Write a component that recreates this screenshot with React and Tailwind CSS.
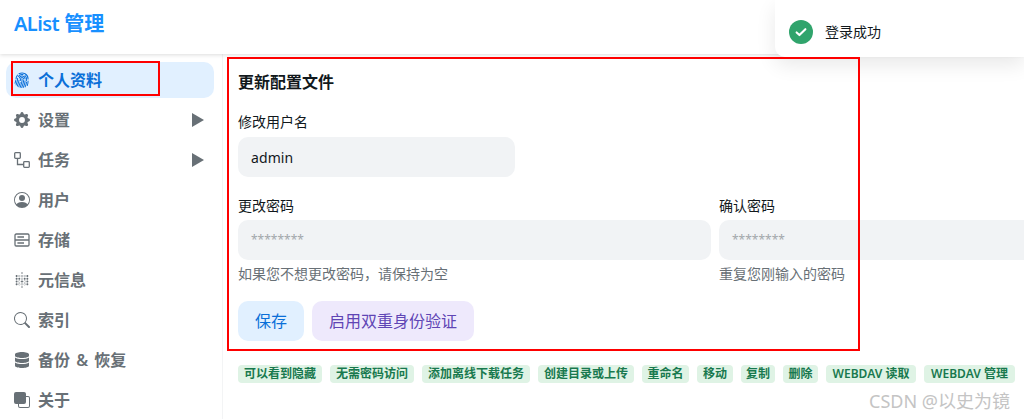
import React from 'react';
import {
  BsFingerprint,
  BsGearFill,
  BsPersonCircle,
  BsSearch,
  BsFront,
} from 'react-icons/bs';
import { SiMetabase } from 'react-icons/si';
import { FaDatabase } from 'react-icons/fa';

const FONT = '"Noto Sans", "Noto Sans CJK SC", sans-serif';

// small two-node flow icon next to the tasks entry
const TasksIcon = () => (
  <svg viewBox="0 0 16 16" className="w-4 h-4" fill="none" stroke="currentColor" strokeWidth="1.3">
    <rect x="0.7" y="0.7" width="5.6" height="5.6" rx="0.8" />
    <rect x="9.7" y="9.7" width="5.6" height="5.6" rx="0.8" />
    <path d="M3.5 6.3v6.2h6.2" />
  </svg>
);

const StorageIcon = () => (
  <svg viewBox="0 0 16 16" className="w-4 h-4" fill="none" stroke="currentColor" strokeWidth="1.3">
    <rect x="1" y="2" width="14" height="12" rx="1.2" />
    <path d="M1 8h14M3.4 5h6.6M3.4 11h6.6" />
  </svg>
);

const menu = [
  { title: '个人资料', icon: <BsFingerprint className="w-4 h-4" />, active: true },
  { title: '设置', icon: <BsGearFill className="w-4 h-4" />, arrow: true },
  { title: '任务', icon: <TasksIcon />, arrow: true },
  { title: '用户', icon: <BsPersonCircle className="w-4 h-4" /> },
  { title: '存储', icon: <StorageIcon /> },
  { title: '元信息', icon: <SiMetabase className="w-4 h-4" /> },
  { title: '索引', icon: <BsSearch className="w-4 h-4" /> },
  { title: '备份 & 恢复', icon: <FaDatabase className="w-4 h-4" /> },
  { title: '关于', icon: <BsFront className="w-4 h-4" /> },
];

const permissions = [
  { text: '可以看到隐藏', size: 'w-[84px]' },
  { text: '无需密码访问', size: 'w-[84px]' },
  { text: '添加离线下载任务', size: 'w-[108px]' },
  { text: '创建目录或上传', size: 'w-[96px]' },
  { text: '重命名', size: 'w-[47px]' },
  { text: '移动', size: 'w-[36px]' },
  { text: '复制', size: 'w-[34px]' },
  { text: '删除', size: 'w-[35px]' },
  { text: 'WEBDAV 读取', size: 'w-[90px]' },
  { text: 'WEBDAV 管理', size: 'w-[91px]' },
];

const Sidebar = () => (
  <aside className="w-[223px] shrink-0 border-r border-[#f3f4f5] pl-[6px] pr-2 pt-2 flex flex-col">
    {menu.map((item) => (
      <div
        key={item.title}
        className={`h-9 mb-1 shrink-0 pl-2 pr-[10px] rounded-[10px] flex items-center gap-2 text-base font-semibold ${
          item.active ? 'bg-[#e1f0ff] text-[#0a6fd8]' : 'text-[#687076]'
        }`}
      >
        <span className="w-4 flex justify-center">{item.icon}</span>
        <span className="flex-1 whitespace-nowrap [word-spacing:2px]">{item.title}</span>
        {item.arrow && (
          <span className="w-0 h-0 border-y-[7px] border-y-transparent border-l-[12px] border-l-[#687076]" />
        )}
      </div>
    ))}
  </aside>
);

const PasswordField = ({ label, hint, className }) => (
  <div className={`flex flex-col shrink-0 ${className}`}>
    <label className="text-sm leading-5 text-[#11181c] mb-[4px]">{label}</label>
    <div className="h-10 rounded-[10px] bg-[#f1f3f5] px-[13px] flex items-center text-xs text-[#a2a7ab]">
      ********
    </div>
    <p className="text-sm leading-5 mt-1 text-[#687076]">{hint}</p>
  </div>
);

export default function App() {
  return (
    <div className="relative h-[419px] w-[1024px] overflow-hidden bg-white flex flex-col" style={{ fontFamily: FONT }}>
      <header className="h-[54px] shrink-0 px-[14px] pt-[10px] shadow-[0_1px_4px_rgba(0,0,0,0.14)] text-[#1890ff] text-xl leading-7 font-semibold z-10 bg-white">
        <span className="tracking-[-0.6px]">AList</span> 管理
      </header>

      <div className="flex flex-1 min-h-0">
        <Sidebar />

        <main className="flex-1 min-w-0 pl-[15px] pt-[17px]">
          <h2 className="text-base leading-[22px] font-bold text-[#11181c]">更新配置文件</h2>

          <div className="mt-[19px] w-[277px]">
            <label className="block text-sm leading-5 text-[#11181c] mb-[5px]">修改用户名</label>
            <div className="h-10 rounded-[10px] bg-[#f1f3f5] px-[13px] pt-px flex items-center text-sm tracking-[0.1px] text-[#11181c]">
              admin
            </div>
          </div>

          <div className="mt-[19px] flex gap-2">
            <PasswordField label="更改密码" hint="如果您不想更改密码，请保持为空" className="w-[473px]" />
            <PasswordField label="确认密码" hint="重复您刚输入的密码" className="w-[473px]" />
          </div>

          <div className="mt-[17px] flex gap-2">
            <button className="h-10 w-[66px] rounded-[10px] bg-[#e1f0ff] text-[#0a6fd8] text-base">保存</button>
            <button className="h-10 w-[162px] rounded-[10px] bg-[#eee9fc] text-[#5f45b5] text-base">启用双重身份验证</button>
          </div>

          <div className="mt-[24px] flex gap-2 whitespace-nowrap">
            {permissions.map((p) => (
              <span
                key={p.text}
                className={`h-[18px] shrink-0 rounded-[4px] bg-[#dff3e5] text-[#18794e] text-xs leading-[18px] font-semibold text-center ${p.size}`}
              >
                {p.text}
              </span>
            ))}
          </div>
        </main>
      </div>

      {/* toast */}
      <div className="absolute top-0 right-0 z-20 w-[249px] h-[57px] bg-white rounded-bl-[10px] pl-[14px] pt-5 flex items-start gap-3 shadow-[0_8px_20px_rgba(0,0,0,0.09)]">
        <span className="w-6 h-6 rounded-full bg-[#30a46c] flex items-center justify-center">
          <svg viewBox="0 0 16 16" className="w-[14px] h-[14px]" fill="none" stroke="white" strokeWidth="2.4" strokeLinecap="round" strokeLinejoin="round">
            <path d="M3 8.5l3.2 3L13 4.8" />
          </svg>
        </span>
        <span className="text-sm leading-6 text-[#11181c]">登录成功</span>
      </div>

      {/* red annotation boxes drawn on top of the screenshot */}
      <div className="absolute z-30 left-[11px] top-[61px] w-[149px] h-[35px] border-2 border-[#fe0000]" />
      <div className="absolute z-30 left-[227px] top-[57px] w-[633px] h-[294px] border-2 border-[#fe0000]" />

      {/* watermark */}
      <span className="absolute z-30 left-[869px] top-[388px] text-[18px] leading-[26px] text-[#c4c4c4] whitespace-nowrap">
        CSDN @以史为镜
      </span>
    </div>
  );
}
